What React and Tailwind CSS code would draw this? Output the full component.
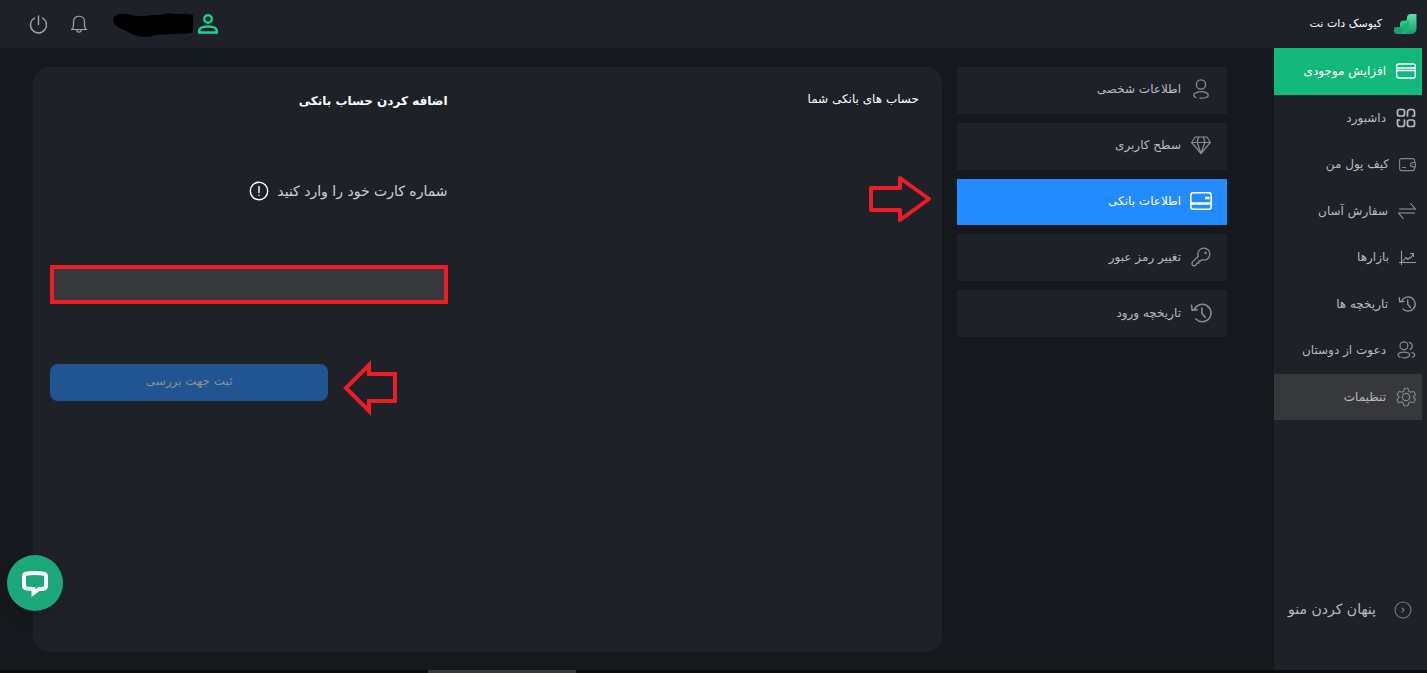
import { useState } from "react";

function Icon({ size = 20, box = 20, stroke = 1.3, className = "", children }) {
  return (
    <svg
      width={size}
      height={size}
      viewBox={`0 0 ${box} ${box}`}
      fill="none"
      stroke="currentColor"
      strokeWidth={stroke}
      strokeLinecap="round"
      strokeLinejoin="round"
      aria-hidden="true"
      className={`shrink-0 ${className}`}
    >
      {children}
    </svg>
  );
}

function HistoryIcon({ size }) {
  return (
    <Icon size={size} box={24} stroke={1.7}>
      <path d="M4.6 8.5A9.5 9.5 0 1 1 6.5 18.5" />
      <path d="M1.6 3.5l.8 5.6 5.6-.6" />
      <path d="M13 6.5v6l3.6 4.2" />
    </Icon>
  );
}

function CardIcon() {
  return (
    <Icon>
      <rect x="0.7" y="3" width="18.6" height="14" rx="2" />
      <path d="M1 7h18M1 9.5h18" />
    </Icon>
  );
}

function GridIcon() {
  return (
    <Icon stroke={1.7}>
      <rect x="1.5" y="1.5" width="7" height="6.5" rx="2" />
      <path d="M11.5 8V4a2.500 2.500 0 0 1 2.500-2.500h2A2.500 2.500 0 0 1 18.500 4v4h-2" />
      <path d="M3.500 12h-2v4A2.500 2.500 0 0 0 4 18.500h2A2.500 2.500 0 0 0 8.500 16v-4" />
      <rect x="11.5" y="12" width="7" height="6.5" rx="2" />
    </Icon>
  );
}

function WalletIcon() {
  return (
    <Icon size={17} box={17} stroke={1.1}>
      <rect x="0.6" y="2.6" width="15" height="12" rx="2" />
      <path d="M3.5 11.5h3" />
      <path d="M16.400 6.500h-2.600a2.200 2.200 0 0 0 0 4.400h2.600z" fill="#1e2128" />
      <path d="M13.8 8.700h.3" />
    </Icon>
  );
}

function SwapIcon() {
  return (
    <Icon size={18} box={18} stroke={1.1}>
      <path d="M1.500 7h16L12.500 1.500" />
      <path d="M16.500 11H.5L5 16.500" />
    </Icon>
  );
}

function ChartIcon() {
  return (
    <Icon size={17} box={17} stroke={1.1}>
      <path d="M2.5 2v13.500M0.500 13.500h16" />
      <path d="M4 12l3-3.500 2 2 1.500-2 1 .5 3-4M11.500 4.500h3v3" />
    </Icon>
  );
}

function FriendsIcon() {
  return (
    <Icon box={24} stroke={1.5}>
      <circle cx="9.500" cy="7" r="4.700" />
      <path d="M16 2.800a4.500 4.500 0 0 1 1 8.400" />
      <path d="M5 20.500c-4.500-1.500-3-6 4.500-6s8.500 4 4.500 6c-2 1-5 1-6.500.5" />
      <path d="M19 15c4.500.8 4.500 4.800.5 5.700" />
    </Icon>
  );
}

function GearIcon() {
  return (
    <Icon box={24} stroke={1.4}>
      <path d="M10.500 1.500h3q1 0 1.200 1l.4 1.700q.2.700.9 1.100l1.200.7q.7.400 1.400.1l1.500-.6q1-.4 1.500.5l1.400 2.400q.5.900-.2 1.500l-1.200 1q-.6.500-.6 1.100t.6 1.100l1.200 1q.7.600.2 1.500l-1.400 2.400q-.5.900-1.500.5l-1.500-.6q-.7-.3-1.400.1l-1.200.7q-.7.400-.9 1.100l-.4 1.700q-.2 1-1.200 1h-3q-1 0-1.200-1l-.4-1.700q-.2-.7-.9-1.100l-1.200-.7q-.7-.4-1.400-.1l-1.500.6q-1 .4-1.500-.5L1.700 15.600q-.5-.9.200-1.500l1.200-1q.6-.5.6-1.100t-.6-1.100l-1.200-1q-.7-.6-.2-1.500l1.400-2.400q.5-.9 1.500-.5l1.500.6q.7.300 1.400-.1l1.200-.7q.7-.4.9-1.100l.4-1.700q.2-1 .5-1z" />
      <circle cx="12" cy="12" r="4.400" />
    </Icon>
  );
}

function PersonIcon() {
  return (
    <Icon>
      <circle cx="10" cy="5.500" r="4.600" />
      <path d="M5 18.600c-2.800-.8-3-3.800-.3-4.800 3-1.200 8-1.200 10.800.1 2.600 1.200 2.300 3.700-.5 4.600-1.800.6-4 .7-6 .6" />
    </Icon>
  );
}

function DiamondIcon() {
  return (
    <Icon stroke={1.2}>
      <path d="M4 2h12l3.300 5.500L10 18.500.7 7.500z" />
      <path d="M.7 7.500h18.600M7.500 2L6.200 7.500 10 18.500l3.800-11L12.500 2" />
    </Icon>
  );
}

function BankCardIcon() {
  return (
    <Icon size={22} box={22} stroke={1.6}>
      <rect x="0.8" y="2.800" width="20.400" height="16.400" rx="2.500" />
      <path d="M1 13.500h20" strokeWidth="2.600" />
      <path d="M15 8h4.500" strokeWidth="2.600" strokeLinecap="butt" />
    </Icon>
  );
}

function KeyIcon() {
  return (
    <Icon>
      <path d="M7.300 9.200a6 6 0 1 1 3.600 3.500L9.500 14H7.800v2H6l-1.500 2.300c-1 .8-3 .6-3.300-.4-.3-1-.2-2.300.4-3z" />
      <path d="M14.500 5.300a.6.600 0 1 0 .1 0" />
    </Icon>
  );
}

const menuItems = [
  { label: "افزایش موجودی", icon: <CardIcon />, style: "bg-[#13b87c] text-white", iconStyle: "text-white" },
  { label: "داشبورد", icon: <GridIcon />, style: "text-[#b9bbc0]", iconStyle: "text-[#b9bbc0]" },
  { label: "کیف پول من", icon: <WalletIcon />, style: "text-[#b9bbc0]", iconStyle: "text-[#85878c]" },
  { label: "سفارش آسان", icon: <SwapIcon />, style: "text-[#b9bbc0]", iconStyle: "text-[#9a9ca0]" },
  { label: "بازارها", icon: <ChartIcon />, style: "text-[#b9bbc0]", iconStyle: "text-[#9a9ca0]" },
  { label: "تاریخچه ها", icon: <HistoryIcon size={18} />, style: "text-[#b9bbc0]", iconStyle: "text-[#9a9ca0]" },
  { label: "دعوت از دوستان", icon: <FriendsIcon />, style: "text-[#b9bbc0]", iconStyle: "text-[#85878c]" },
  { label: "تنظیمات", icon: <GearIcon />, style: "bg-[#37383c] text-[#b9bbc0]", iconStyle: "text-[#85878c]" },
];

const settingTabs = [
  { id: "personal", label: "اطلاعات شخصی", icon: <PersonIcon /> },
  { id: "level", label: "سطح کاربری", icon: <DiamondIcon /> },
  { id: "bank", label: "اطلاعات بانکی", icon: <BankCardIcon /> },
  { id: "password", label: "تغییر رمز عبور", icon: <KeyIcon /> },
  { id: "logins", label: "تاریخچه ورود", icon: <HistoryIcon size={22} /> },
];

function Logo() {
  return (
    <svg width="23" height="22" viewBox="0 0 23 22" aria-hidden="true">
      <defs>
        <linearGradient id="step" x1="0" y1="0" x2="0" y2="1">
          <stop offset="0" stopColor="#5fe0a8" />
          <stop offset="1" stopColor="#149a6b" />
        </linearGradient>
      </defs>
      <path d="M13 5q0-4 4-4h5.500v14q0 6-6 6H9z" fill="url(#step)" />
      <path d="M6 11q0-3.500 3.500-3.500H15V14q0 7-7 7H6z" fill="#2cc48a" />
      <path d="M0 16q0-2 2-2h6q2 0 2 2 0 5-5 5H4q-4 0-4-3z" fill="#1c9f70" />
      <path d="M6 14.500q4 0 4 3 0 2-2 3.500h3q4-2 4-7V8" fill="#1fb07a" />
    </svg>
  );
}

function Header() {
  return (
    <header className="flex h-12 items-center justify-between bg-[#1e2128] pr-[10px] pl-[29px]">
      <div className="flex items-center gap-3">
        <Logo />
        <span className="text-[11px] font-medium text-white">کیوسک دات نت</span>
      </div>
      <div className="flex items-center text-[#a4a6aa]">
        <svg width="20" height="20" viewBox="0 0 20 20" fill="none" stroke="#13d68f" strokeWidth="2.400" aria-hidden="true">
          <circle cx="10" cy="5" r="3.800" />
          <path d="M1.200 18.500v-1.800c0-5.600 17.600-5.600 17.600 0v1.800z" />
        </svg>
        <svg width="82" height="26" viewBox="0 0 82 26" className="mr-1" aria-hidden="true">
          <path
            d="M1 8c1-4 7-6 14-5 6 1 10 3 17 2 7-1 10-1 16-1 5-1 9-2 14-1 7 1 13-1 19 1v17c-6 3-12 1-18 2-8 0-14 1-20 1-8 3-15 2-21 0-5-2-8-4-12-6-4-2-9-4-9-10z"
            fill="#000"
          />
        </svg>
        <button type="button" aria-label="اعلان ها" className="mr-6">
          <Icon size={18} box={18} stroke={1.2}>
            <path d="M1.500 14.500c1.500-1 2-2 2-4V6.500c0-7 11-7 11 0v4c0 2 .5 3 2 4z" />
            <path d="M6.800 15c.2 2.900 4.200 2.900 4.400 0" />
          </Icon>
        </button>
        <button type="button" aria-label="خروج" className="mr-[22px]">
          <Icon size={19} box={19} stroke={1.4}>
            <path d="M5.500 3a8 8 0 1 0 8 0M9.500 1v8.500" />
          </Icon>
        </button>
      </div>
    </header>
  );
}

function Sidebar() {
  return (
    <aside className="flex w-[153px] shrink-0 flex-col bg-[#1e2128]">
      <nav className="mr-[5px] grid h-[372px] grid-rows-8">
        {menuItems.map((item) => (
          <a
            key={item.label}
            href="#"
            className={`flex items-center gap-[10px] pr-[6px] text-[12px] whitespace-nowrap ${item.style}`}
          >
            <span className={item.iconStyle}>{item.icon}</span>
            {item.label}
          </a>
        ))}
      </nav>
      <button
        type="button"
        className="mt-auto mb-[50px] flex items-center gap-[18px] pr-[15px] text-[14px] whitespace-nowrap text-[#b9bbc0]"
      >
        <Icon size={18} box={18} stroke={1.1} className="text-[#77797e]">
          <circle cx="9" cy="9" r="8" />
          <path d="M8 7l2 2-2 2" />
        </Icon>
        پنهان کردن منو
      </button>
    </aside>
  );
}

function SettingTabs() {
  const [active, setActive] = useState("bank");

  return (
    <div className="grid h-[270px] w-[270px] shrink-0 grid-rows-5 gap-[9px]">
      {settingTabs.map((tab) => (
        <button
          key={tab.id}
          type="button"
          onClick={() => setActive(tab.id)}
          className={`flex items-center gap-2 pr-[14px] pb-[2px] text-[12px] ${
            active === tab.id ? "bg-[#228bff] text-white" : "bg-[#1e2128] text-[#b9bbc0]"
          }`}
        >
          <span className={`flex w-6 justify-center ${active === tab.id ? "" : "text-[#8b8d92]"}`}>{tab.icon}</span>
          {tab.label}
        </button>
      ))}
    </div>
  );
}

function BankAccounts() {
  const [card, setCard] = useState("");

  return (
    <section className="relative grid flex-1 grid-cols-2 rounded-2xl bg-[#1e2128]">
      <h2 className="pt-6 pr-[23px] text-[12px] leading-4 text-white">حساب های بانکی شما</h2>

      <form className="pt-6 pr-10 pl-[17px]" onSubmit={(e) => e.preventDefault()}>
        <h2 className="text-[12px] leading-5 font-bold text-white">اضافه کردن حساب بانکی</h2>
        <div className="mt-[70px] flex items-center gap-2">
          <label htmlFor="card" className="text-[14px] leading-5 text-[#d0d2d6]">
            شماره کارت خود را وارد کنید
          </label>
          <Icon stroke={1.4} className="text-white">
            <circle cx="10" cy="10" r="8.700" />
            <path d="M10 5.500v6M10 14.200v.2" />
          </Icon>
        </div>
        <input
          id="card"
          type="text"
          value={card}
          onChange={(e) => setCard(e.target.value)}
          className="mt-16 block h-[39px] w-full border-4 border-[#ee1c25] bg-[#37383c] px-3 text-[13px] text-white outline-none"
        />
        <div className="mt-14 flex items-start justify-end gap-[15px]">
          <svg width="54" height="56" viewBox="0 0 54 56" fill="none" stroke="#ee1c25" strokeWidth="4" className="shrink-0" aria-hidden="true">
            <path d="M3 28L26 5v9h26v27H26v10z" />
          </svg>
          <button type="submit" className="mt-1 h-[37px] w-[70%] rounded-lg bg-[#205592] pb-1 text-[12px] text-[#8b8f96]">
            ثبت جهت بررسی
          </button>
        </div>
      </form>

      <svg
        width="64"
        height="48"
        viewBox="0 0 64 48"
        fill="none"
        stroke="#ee1c25"
        strokeWidth="4"
        strokeLinejoin="round"
        className="absolute top-[108px] right-[10px]"
        aria-hidden="true"
      >
        <path d="M3 13h29V3l29 21-29 21V35H3z" />
      </svg>
    </section>
  );
}

export default function App() {
  return (
    <div dir="rtl" className="flex min-h-screen flex-col bg-[#15181c] font-['DejaVu_Sans',sans-serif]">
      <Header />
      <div className="flex flex-1">
        <Sidebar />
        <main className="flex flex-1 gap-[15px] pt-[19px] pr-[47px] pb-[18px] pl-[33px]">
          <SettingTabs />
          <BankAccounts />
        </main>
      </div>
      <div className="flex h-[3px] justify-end bg-[#0c0c0d]">
        <div className="ml-[30%] w-[148px] bg-[#38383a]" />
      </div>

      <button
        type="button"
        aria-label="گفتگو"
        className="fixed bottom-[62px] left-[7px] flex size-14 items-center justify-center rounded-full bg-[#1ba97b] shadow-lg"
      >
        <svg width="28" height="28" viewBox="0 0 28 28" fill="none" stroke="#fff" strokeWidth="4" aria-hidden="true">
          <path d="M6 4.500q8-1 16 0 3 .3 3 3v9q0 3-3 3.500h-4L12.500 24v-4L6 19.500q-3-.3-3-3v-9q0-2.700 3-3z" />
        </svg>
      </button>
    </div>
  );
}
